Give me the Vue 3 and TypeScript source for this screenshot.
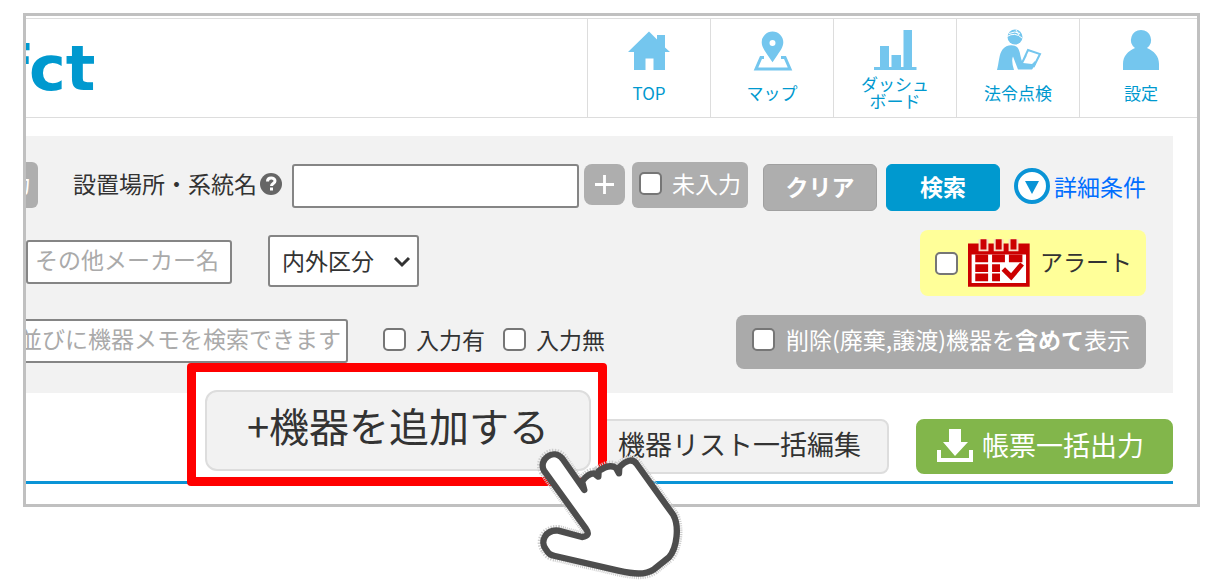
<script setup lang="ts">
import { ref } from 'vue'

type IconName = 'home' | 'map' | 'chart' | 'inspect' | 'user'
interface NavItem {
  icon: IconName
  lines: string[]
}

const navItems: NavItem[] = [
  { icon: 'home', lines: ['TOP'] },
  { icon: 'map', lines: ['マップ'] },
  { icon: 'chart', lines: ['ダッシュ', 'ボード'] },
  { icon: 'inspect', lines: ['法令点検'] },
  { icon: 'user', lines: ['設定'] },
]

const place = ref('')
const maker = ref('')
const memo = ref('')
</script>

<template>
  <main class="page">
    <div class="stage">
      <div class="frame">
        <header class="header">
          <div class="logo">fct</div>
          <nav class="nav">
            <a v-for="item in navItems" :key="item.icon" class="nav-item" href="#">
              <svg class="nav-icon" viewBox="0 0 44 42" aria-hidden="true">
                <path
                  v-if="item.icon === 'home'"
                  d="M22 2.5 30 10.500V6h8v12.500L43 23h-5v18H26.500V29.500h-8V41H7V23H1Z"
                />
                <template v-else-if="item.icon === 'map'">
                  <path class="line" d="M14 28.500H11L6 40h34l-5-11.500h-4" />
                  <path
                    fill-rule="evenodd"
                    d="M22.500 2.500a10.800 10.800 0 0 0-10.800 10.800c0 5 3.500 9 6 13l4.800 7 4.800-7c2.500-4 6-8 6-13a10.800 10.800 0 0 0-10.800-10.800Zm0 8.500a3 3 0 1 1 0 6 3 3 0 0 1 0-6Z"
                  />
                </template>
                <path
                  v-else-if="item.icon === 'chart'"
                  d="M1 38h6V17h9v21h2.500V26H28v12h2.500V1H39v37h4.500v3H1Z"
                />
                <template v-else-if="item.icon === 'inspect'">
                  <circle cx="19" cy="8" r="7.500" />
                  <path class="gap" d="M11 7.500q8-5 15 1.500M13 4.500q6-3 11 0M20 1l3 5" />
                  <path
                    d="M1 41C3 34 3 25 6.500 20.500 10 15.500 18 15 21.500 18.500 24.500 22 24 29 27 34l9 1 3-3 1 3-4 5.500H22l-5-13q-2 4 1 13.500Z"
                  />
                  <path class="line thin" d="M26.500 33 32 21l12 4-6.500 13M26 34l4-8" />
                </template>
                <path
                  v-else
                  d="M22 1a10 10 0 0 1 6 18c7 3 12 8 12 16v6H4v-6c0-8 5-13 12-16a10 10 0 0 1 6-18Z"
                />
              </svg>
              <span class="nav-label">
                <span v-for="line in item.lines" :key="line">{{ line }}</span>
              </span>
            </a>
          </nav>
        </header>

        <form class="panel" @submit.prevent>
          <div class="row row-first">
            <label class="toggle cut-toggle"><input type="checkbox" class="check" />未入力</label>
            <label class="field-label" for="place">設置場所・系統名</label>
            <svg class="help" viewBox="0 0 22 22" aria-hidden="true">
              <circle cx="11" cy="11" r="11" fill="#666" />
              <path d="M7.500 8.500c0-4.500 7.500-4.500 7.500-.5 0 2.500-3.500 2.500-3.500 5" fill="none" stroke="#fff" stroke-width="3" />
              <path d="M10 14.500h3v3h-3z" fill="#fff" />
            </svg>
            <input id="place" v-model="place" class="text place" type="text" />
            <button class="plus" type="button" aria-label="追加">
              <svg viewBox="0 0 20 20" aria-hidden="true"><path d="M10 0v20M0 10h20" stroke="#fff" stroke-width="3" /></svg>
            </button>
            <label class="toggle"><input type="checkbox" class="check" />未入力</label>
            <button class="action clear" type="reset">クリア</button>
            <button class="action search" type="submit">検索</button>
            <a class="detail" href="#">
              <svg viewBox="0 0 36 36" aria-hidden="true">
                <circle cx="18" cy="18" r="16" fill="#fff" stroke="#0a94d6" stroke-width="4" />
                <path d="M11 13h14l-7 13Z" fill="#0a94d6" />
              </svg>詳細条件
            </a>
          </div>

          <div class="row row-second">
            <input v-model="maker" class="text maker" type="text" placeholder="その他メーカー名" aria-label="その他メーカー名" />
            <div class="select-wrap">
              <select class="select" aria-label="内外区分">
                <option>内外区分</option>
              </select>
              <svg class="chevron" viewBox="0 0 18 12" aria-hidden="true">
                <path d="M2 2l7 7 7-7" fill="none" stroke="#333" stroke-width="3" />
              </svg>
            </div>
            <label class="alert">
              <input type="checkbox" class="check" />
              <svg class="calendar" viewBox="204 267 188 144" aria-hidden="true">
                <path d="M204 280h187v131H204Z" fill="#c00" />
                <path d="M215 313h165v87H215Z" fill="#fff" />
                <path d="M236 267h30v36h-30ZM282 267h30v36h-30ZM327 267h30v36h-30Z" fill="#f6dcc8" />
                <path
                  d="M242 267h18v31h-18ZM288 267h18v31h-18ZM333 267h18v31h-18ZM226 313h39v24h-39ZM277 313h39v24h-39ZM328 313h41v24h-41ZM226 343h39v23h-39ZM277 343h24v23h-24ZM226 371h39v23h-39ZM277 371h24v23h-24Z"
                  fill="#c00"
                />
                <path d="M311 357l24 24 33-39" fill="none" stroke="#c00" stroke-width="15" />
              </svg>
              <span>アラート</span>
            </label>
          </div>

          <div class="row row-third">
            <input
              v-model="memo"
              class="text memo"
              type="text"
              placeholder="並びに機器メモを検索できます"
              aria-label="並びに機器メモを検索できます"
            />
            <label class="option"><input type="checkbox" class="check" />入力有</label>
            <label class="option"><input type="checkbox" class="check" />入力無</label>
            <label class="include">
              <input type="checkbox" class="check" />
              <span>削除(廃棄,譲渡)機器を<b>含めて</b>表示</span>
            </label>
          </div>
        </form>

        <div class="toolbar">
          <button class="tool edit" type="button">機器リスト一括編集</button>
          <button class="tool export" type="button">
            <svg viewBox="0 0 36 34" aria-hidden="true">
              <path d="M12 1h12v13h7L18 28 6 14h6Z" fill="#fff" />
              <path d="M2 22v10h32V22" fill="none" stroke="#fff" stroke-width="4" />
            </svg>帳票一括出力
          </button>
        </div>
      </div>

      <div class="callout">
        <button class="add" type="button">+機器を追加する</button>
        <svg class="hand" viewBox="0 0 480 429" aria-hidden="true">
          <g stroke-linejoin="round">
            <path
              v-for="layer in ['halo', 'outline']"
              :key="layer"
              :class="layer"
              d="M42 92 167 265Q184 288 156 291L85 272C48 268 27 305 49 330Q57 345 75 348L265 392C310 402 345 406 372 388L417 352C442 322 448 258 430 225L320 72C308 54 288 61 268 82L267 100 258 84Q240 70 206 93L205 110 192 100Q174 100 156 124L163 150 98 57C70 22 24 60 42 92Z"
            />
          </g>
        </svg>
      </div>
    </div>
  </main>
</template>

<style>
body {
  margin: 0;
  background: #fff;
}
</style>

<style scoped>
* {
  box-sizing: border-box;
}
.page {
  min-height: 100vh;
  padding: 13px 25px 0 23px;
  color: #333;
  font-family: "Noto Sans CJK JP", sans-serif;
  font-size: 23px;
  line-height: 32px;
  white-space: nowrap;
}
button,
input,
select {
  margin: 0;
  font: inherit;
  color: inherit;
}
a {
  text-decoration: none;
}
svg {
  display: block;
  flex: none;
}
.stage {
  position: relative;
}
.frame {
  overflow: hidden;
  padding: 2px 0 20px;
  border: 3px solid #c0c0c0;
  background: #fff;
}
.header {
  display: flex;
  justify-content: space-between;
  margin-right: -5px;
  border: solid #ddd;
  border-width: 1px 0;
}
.logo {
  margin-left: -24px;
  padding-top: 2px;
  color: #0099cf;
  font-family: "DejaVu Sans", sans-serif;
  font-size: 62px;
  font-weight: bold;
  line-height: 96px;
}
.nav {
  display: flex;
}
.nav-item {
  display: flex;
  flex-direction: column;
  align-items: center;
  gap: 4px;
  width: 123px;
  padding: 10px 0 8px;
  border-left: 1px solid #ddd;
  color: #0099cf;
  font-size: 17px;
  line-height: 17px;
}
.nav-icon {
  width: 44px;
  height: 42px;
  overflow: visible;
  fill: #74c6ee;
}
.nav-icon .line {
  fill: none;
  stroke: #74c6ee;
  stroke-width: 3;
}
.nav-icon .thin {
  stroke-width: 2;
}
.nav-icon .gap {
  fill: none;
  stroke: #fff;
  stroke-width: 1;
}
.nav-label {
  display: flex;
  flex-direction: column;
  justify-content: center;
  align-items: center;
  height: 34px;
}
.panel {
  display: flex;
  flex-direction: column;
  gap: 19px;
  margin: 18px 24px 0 0;
  padding: 26px 27px 24px 0;
  background: #f2f2f2;
}
.row {
  display: flex;
  align-items: center;
}
.row-first {
  align-items: flex-start;
  height: 49px;
  padding-top: 2px;
}
.field-label {
  line-height: 38px;
}
.check {
  flex: none;
  width: 23px;
  height: 23px;
  appearance: none;
  border: 2px solid #767676;
  border-radius: 5px;
  background: #fff;
}
.toggle {
  display: flex;
  align-items: center;
  gap: 10px;
  height: 46px;
  margin-top: -2px;
  padding: 0 7px 4px;
  border-radius: 6px;
  background: #aeaeae;
  color: #fff;
}
.cut-toggle {
  margin: -2px 35px 0 -104px;
}
.help {
  width: 22px;
  height: 22px;
  margin: 9px 10px 0 3px;
}
.text {
  height: 44px;
  padding: 0 7px 6px;
  border: 2px solid #858585;
  border-radius: 3px;
  background: #fff;
}
.text::placeholder {
  color: #aaa;
  opacity: 1;
}
.place {
  flex: 1;
  min-width: 0;
}
.plus {
  display: grid;
  place-items: center;
  width: 41px;
  height: 41px;
  margin: 0 7px 0 5px;
  padding: 0;
  border: 0;
  border-radius: 8px;
  background: #aeaeae;
}
.plus svg {
  width: 19px;
  height: 19px;
}
.action {
  width: 114px;
  height: 47px;
  padding: 0 0 4px;
  border: 1px solid #a0a0a0;
  border-radius: 6px;
  background: #aeaeae;
  color: #fff;
  font-weight: bold;
}
.clear {
  margin: 0 9px 0 15px;
}
.search {
  border-color: #0099cf;
  background: #0099cf;
}
.detail {
  display: flex;
  align-items: center;
  gap: 4px;
  height: 44px;
  margin-left: 14px;
  color: #006eff;
}
.detail svg {
  width: 36px;
  height: 36px;
}
.maker {
  width: 206px;
  margin-bottom: 2px;
}
.select-wrap {
  position: relative;
  margin: 0 0 4px 36px;
}
.select {
  display: block;
  width: 151px;
  height: 52px;
  padding: 0 12px 2px;
  appearance: none;
  border: 2px solid #858585;
  border-radius: 3px;
  background: #fff;
}
.chevron {
  position: absolute;
  top: 21px;
  right: 8px;
  width: 18px;
  height: 12px;
  pointer-events: none;
}
.alert {
  display: flex;
  align-items: center;
  gap: 10px;
  height: 66px;
  margin-left: auto;
  padding: 0 14px 0 15px;
  border-radius: 8px;
  background: #ffff99;
}
.alert span {
  padding-bottom: 4px;
}
.calendar {
  width: 62px;
  height: 48px;
}
.memo {
  width: 342px;
  margin: 0 0 2px -20px;
  padding-right: 5px;
  text-align: right;
}
.option {
  display: flex;
  align-items: center;
  gap: 10px;
  margin-left: 18px;
  padding-bottom: 6px;
}
.memo + .option {
  margin-left: 35px;
}
.include {
  display: flex;
  align-items: center;
  gap: 11px;
  height: 54px;
  margin-left: auto;
  padding: 0 16px 6px;
  border-radius: 8px;
  background: #aaa;
  color: #fff;
}
.toolbar {
  display: flex;
  justify-content: flex-end;
  gap: 27px;
  margin-right: 24px;
  padding: 26px 0 7px;
  border-bottom: 3px solid #0a94d6;
}
.tool {
  display: flex;
  align-items: center;
  gap: 9px;
  height: 55px;
  padding: 0 26px 6px;
  border: 2px solid #ddd;
  border-radius: 8px;
  background: #f2f2f2;
  font-size: 27px;
}
.export {
  padding: 0 27px 4px 19px;
  border-color: #82b64b;
  background: #82b64b;
  color: #fff;
}
.export svg {
  width: 36px;
  height: 34px;
}
.callout {
  position: absolute;
  right: 593px;
  bottom: 21px;
  padding: 18px 7px 6px 9px;
  border: 9px solid #f00;
  border-radius: 4px;
  background: #fff;
}
.add {
  display: block;
  width: 386px;
  height: 81px;
  padding: 0 0 12px;
  border: 2px solid #ddd;
  border-radius: 12px;
  background: #f2f2f2;
  font-size: 40px;
}
.hand {
  position: absolute;
  top: 68px;
  left: 334px;
  width: 160px;
  height: 143px;
  overflow: visible;
}
.halo {
  fill: none;
  stroke: #ccc;
  stroke-width: 34;
  stroke-dasharray: 3 3;
}
.outline {
  fill: #fff;
  stroke: #4d4d4d;
  stroke-width: 19;
}
</style>
